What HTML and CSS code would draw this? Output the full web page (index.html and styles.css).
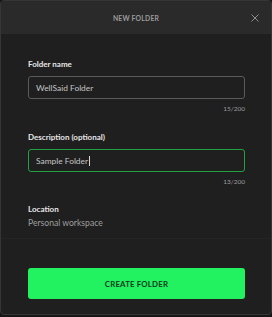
FILE: index.html
```html
<!DOCTYPE html>
<html lang="en">
<head>
    <meta charset="UTF-8">
    <meta name="viewport" content="width=device-width, initial-scale=1.0">
    <title>New Folder</title>
    <link rel="stylesheet" href="styles.css">
</head>
<body>
    <div class="modal">
        <div class="modal-header">
            <span class="modal-title">NEW FOLDER</span>
            <button class="close-btn" aria-label="Close">
                <svg width="8" height="8" viewBox="0 0 8 8">
                    <path d="M0.5 0.5 L7.5 7.5 M7.5 0.5 L0.5 7.5" stroke="#8e8e8e" stroke-width="1" fill="none"/>
                </svg>
            </button>
        </div>

        <div class="modal-body">
            <div class="field">
                <label class="field-label">Folder name</label>
                <div class="text-input">WellSaid Folder</div>
                <div class="counter">15/200</div>
            </div>
            <div class="field">
                <label class="field-label">Description (optional)</label>
                <div class="text-input focused">Sample Folder<span class="caret"></span></div>
                <div class="counter">13/200</div>
            </div>
            <div class="field location">
                <label class="field-label">Location</label>
                <div class="location-value">Personal workspace</div>
            </div>
        </div>

        <div class="modal-footer">
            <button class="create-btn">CREATE FOLDER</button>
        </div>
    </div>
</body>
</html>
```

FILE: styles.css
```css
body {
    margin: 0;
    background: #161616;
    font-family: 'Lato', 'Noto Sans', sans-serif;
    color: #ddd;
}

.modal {
    width: 270px;
    height: 313px;
    border: 1px solid #363636;
    border-radius: 4px;
    background: #1f1f1f;
    overflow: hidden;
    display: flex;
    flex-direction: column;
}

.modal-header {
    flex-shrink: 0;
    height: 33px;
    background: #2a2a2a;
    display: flex;
    align-items: center;
    justify-content: center;
    position: relative;
}

.modal-title {
    font-size: 6.8px;
    font-weight: bold;
    letter-spacing: 0.2px;
    color: #9a9a9a;
}

.close-btn {
    position: absolute;
    right: 12px;
    top: 13px;
    background: none;
    border: none;
    padding: 0;
    width: 8px;
    height: 8px;
    display: flex;
}

.modal-body {
    padding: 25px 26px 0 27px;
    flex: 1;
}

.field {
    display: flex;
    flex-direction: column;
    margin-bottom: 19px;
}

.field-label {
    font-size: 8px;
    line-height: 10px;
    font-weight: bold;
    color: #e6e6e6;
    margin-bottom: 7px;
}

.text-input {
    height: 21px;
    border: 1px solid #5a5a5a;
    border-radius: 3px;
    padding: 0 7px;
    display: flex;
    align-items: center;
    font-size: 8.4px;
    color: #c4c4c4;
}

.text-input.focused {
    border-color: #23a044;
}

.caret {
    display: inline-block;
    width: 1px;
    height: 10px;
    background: #d8d8d8;
    margin-left: 1px;
}

.counter {
    text-align: right;
    font-size: 6.5px;
    line-height: 8px;
    color: #9c9c9c;
    margin-top: 6px;
}

.location {
    margin-top: -1px;
    margin-bottom: 0;
}

.location .field-label {
    margin-bottom: 4px;
}

.location-value {
    font-size: 8.6px;
    line-height: 11px;
    color: #9e9e9e;
}

.modal-footer {
    flex-shrink: 0;
    border-top: 1px solid #242424;
    padding: 29px 26px 15px 27px;
}

.create-btn {
    display: block;
    width: 100%;
    height: 31px;
    border: none;
    border-radius: 3px;
    background: #22f25f;
    color: #0f3b1f;
    font-family: 'Lato', 'Noto Sans', sans-serif;
    font-size: 7.8px;
    font-weight: bold;
    letter-spacing: 0.2px;
}
```
